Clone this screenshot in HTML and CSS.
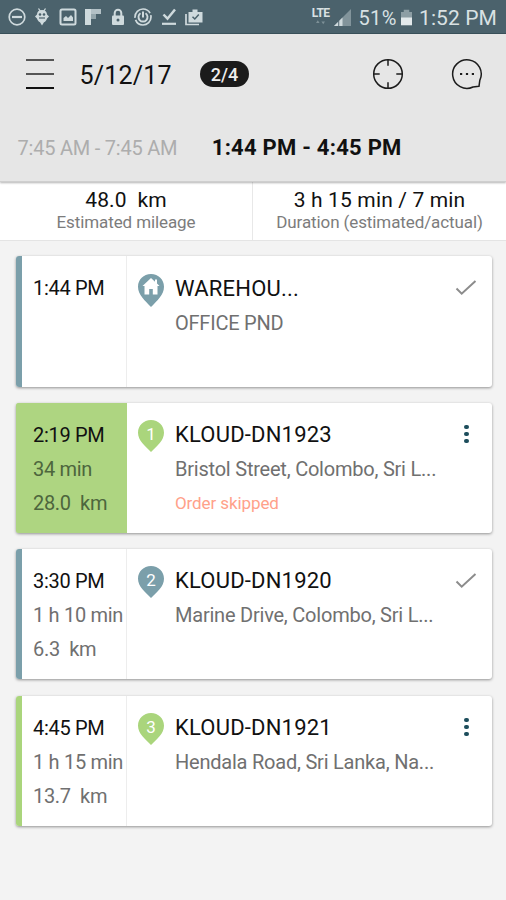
FILE: index.html
```html
<!DOCTYPE html>
<html lang="en">
<head>
  <meta charset="UTF-8" />
  <title>Route 5/12/17</title>
  <link rel="stylesheet" href="styles.css">
</head>
<body>

  <div class="status-bar">
    <div class="status-icons">
      <svg viewBox="0 0 18 18"><circle cx="9" cy="9" r="7.8" fill="none" stroke="#cfdadd" stroke-width="1.7"/><path d="M4 9h10" stroke="#cfdadd" stroke-width="2.2"/></svg>
      <svg viewBox="0 0 18 18"><path d="M5.5 0.5l2 3M12.5 0.5l-2 3" stroke="#cfdadd" stroke-width="1.3"/><path d="M9 2c3.200 0 5 2 5 4.500l2 2-2 2c-.5 2-1.500 3-3 3.800L9 17.500l-2-3.200c-1.500-.8-2.500-1.800-3-3.800l-2-2 2-2C4 4 5.800 2 9 2z" fill="#cfdadd"/><circle cx="7" cy="6.500" r="1.300" fill="#4b626c"/><circle cx="11" cy="6.500" r="1.300" fill="#4b626c"/><path d="M6 10h6" stroke="#4b626c" stroke-width="1.200"/></svg>
      <svg viewBox="0 0 18 18"><rect x="1.500" y="1.500" width="15" height="15" rx="1.500" fill="none" stroke="#cfdadd" stroke-width="2"/><path d="M4.500 13V10l2.500-2 2 2 3-3 2 2.500V13z" fill="#cfdadd"/></svg>
      <svg viewBox="0 0 18 18"><path d="M1 1h6v16H1z" fill="#cfdadd"/><path d="M7 1h10v5H7z" fill="#b3c1c6"/><path d="M7 6h5v5H7z" fill="#93a5ab"/></svg>
      <svg viewBox="0 0 18 18"><path d="M5.700 8V5a3.300 3.300 0 0 1 6.600 0v3" fill="none" stroke="#cfdadd" stroke-width="2"/><rect x="3" y="7.500" width="12" height="9.500" rx="1" fill="#cfdadd"/><circle cx="9" cy="12" r="1.500" fill="#4b626c"/></svg>
      <svg viewBox="0 0 18 18"><circle cx="9" cy="9" r="8" fill="none" stroke="#cfdadd" stroke-width="1.700" stroke-dasharray="22 2"/><path d="M6.500 5.300a4.500 4.500 0 1 0 5 0" fill="none" stroke="#cfdadd" stroke-width="1.900"/><path d="M9 3.500v6" stroke="#cfdadd" stroke-width="2"/></svg>
      <svg viewBox="0 0 18 18"><path d="M3.500 6.500l4 4.200L15 1.500" fill="none" stroke="#cfdadd" stroke-width="2.500"/><path d="M2 15.800h14" stroke="#cfdadd" stroke-width="2.200"/></svg>
      <svg viewBox="0 0 18 18"><path d="M1 6v10.500h13" fill="none" stroke="#cfdadd" stroke-width="1.700"/><path d="M3.500 4h4V1.500h5V4h5v10.500h-14z" fill="#cfdadd"/><path d="M7.500 8.700l2.300 2.300 4-4.500" fill="none" stroke="#4b626c" stroke-width="1.500"/></svg>
    </div>
    <div class="status-info">
      <div class="lte">LTE<svg viewBox="0 0 10 5"><path d="M0 3l2-3 2 3zM6 1.500h4l-2 3z" fill="#7d9097"/></svg></div>
      <svg class="signal" viewBox="0 0 18 18"><path d="M0 18L18 0v18z" fill="#82949b"/><path d="M0 18L9 9v9z" fill="#cfdadd"/><path d="M5 12v6" stroke="#4b626c" stroke-width="1"/></svg>
      <span class="percent">51%</span>
      <svg class="battery" viewBox="0 0 12 17"><path d="M0 2.500h3V0h6v2.500h3V9H0z" fill="#8d9ea4"/><path d="M0 8.500h12V17H0z" fill="#e3e9eb"/></svg>
      <span class="clock">1:52 PM</span>
    </div>
  </div>

  <div class="header">
    <div class="toolbar">
      <div class="menu">
        <span></span>
        <span></span>
        <span></span>
      </div>
      <div class="date">5/12/17</div>
      <div class="badge">2/4</div>
      <svg class="locate" viewBox="0 0 32 32" fill="none" stroke="#1c1c1c" stroke-width="1.500"><circle cx="16" cy="16" r="14.300"/><path d="M16 1.700v6M16 24.300v6M1.700 16h6M24.300 16h6"/></svg>
      <svg class="chat" viewBox="0 0 32 32" fill="none" stroke="#1c1c1c" stroke-width="1.500"><path d="M22 29A14.300 14.300 0 1 1 28.800 22.300L28 28.300z" stroke-linejoin="round"/><path d="M9 16h2.200M14.900 16h2.200M20.800 16h2.200" stroke-width="2"/></svg>
    </div>
    <div class="tabs">
      <div class="tab">7:45 AM - 7:45 AM</div>
      <div class="tab active">1:44 PM - 4:45 PM</div>
    </div>
  </div>

  <div class="summary">
    <div class="stat">
      <div class="value">48.0&nbsp; km</div>
      <div class="label">Estimated mileage</div>
    </div>
    <div class="stat">
      <div class="value">3 h 15 min / 7 min</div>
      <div class="label">Duration (estimated/actual)</div>
    </div>
  </div>

  <div class="stops">
    <div class="card blue">
      <div class="times">
        <div class="time">1:44 PM</div>
      </div>
      <svg class="pin" viewBox="0 0 26 33"><path d="M13 0C5.500 0 0 5.600 0 12.700 0 21 7 26.500 13 33c6-6.500 13-12 13-20.300C26 5.600 20.500 0 13 0z" fill="#7b9faa"/><path d="M13 4L4.500 12h2v8.500h4.700V15h3.600v5.500h4.700V12h2l-2.500-2.400V5.500h-2v2.200z" fill="#fff"/></svg>
      <div class="info">
        <div class="name">WAREHOU...</div>
        <div class="address">OFFICE PND</div>
      </div>
      <svg class="check" viewBox="0 0 22 18"><path d="M1.500 9.500l5.200 5.200L20.500 2" fill="none" stroke="#8c8c8c" stroke-width="2"/></svg>
    </div>

    <div class="card green current">
      <div class="times">
        <div class="time">2:19 PM</div>
        <div>34 min</div>
        <div>28.0&nbsp; km</div>
      </div>
      <svg class="pin" viewBox="0 0 26 33"><path d="M13 0C5.500 0 0 5.600 0 12.700 0 20.500 7 26 13 32c6-6 13-11.500 13-19.300C26 5.600 20.500 0 13 0z" fill="#aad57c"/><text x="13" y="19.500">1</text></svg>
      <div class="info">
        <div class="name">KLOUD-DN1923</div>
        <div class="address">Bristol Street, Colombo, Sri L...</div>
        <div class="skipped">Order skipped</div>
      </div>
      <div class="more"><i></i><i></i><i></i></div>
    </div>

    <div class="card blue">
      <div class="times">
        <div class="time">3:30 PM</div>
        <div>1 h 10 min</div>
        <div>6.3&nbsp; km</div>
      </div>
      <svg class="pin" viewBox="0 0 26 33"><path d="M13 0C5.500 0 0 5.600 0 12.700 0 20.500 7 26 13 32c6-6 13-11.500 13-19.300C26 5.600 20.500 0 13 0z" fill="#7b9faa"/><text x="13" y="19.500">2</text></svg>
      <div class="info">
        <div class="name">KLOUD-DN1920</div>
        <div class="address">Marine Drive, Colombo, Sri L...</div>
      </div>
      <svg class="check" viewBox="0 0 22 18"><path d="M1.500 9.500l5.200 5.200L20.500 2" fill="none" stroke="#8c8c8c" stroke-width="2"/></svg>
    </div>

    <div class="card green">
      <div class="times">
        <div class="time">4:45 PM</div>
        <div>1 h 15 min</div>
        <div>13.7&nbsp; km</div>
      </div>
      <svg class="pin" viewBox="0 0 26 33"><path d="M13 0C5.500 0 0 5.600 0 12.700 0 20.500 7 26 13 32c6-6 13-11.500 13-19.300C26 5.600 20.500 0 13 0z" fill="#aad57c"/><text x="13" y="19.500">3</text></svg>
      <div class="info">
        <div class="name">KLOUD-DN1921</div>
        <div class="address">Hendala Road, Sri Lanka, Na...</div>
      </div>
      <div class="more"><i></i><i></i><i></i></div>
    </div>
  </div>

</body>
</html>
```
FILE: styles.css
```css
* {
  box-sizing: border-box;
}

body {
  font-family: Roboto, "Liberation Sans", sans-serif;
  background: #f3f3f3;
  margin: 0;
  height: 900px;
  overflow: hidden;
  color: #111;
  white-space: nowrap;
}

svg {
  display: block;
  flex: none;
}

.status-bar {
  display: flex;
  justify-content: space-between;
  height: 34px;
  padding: 0 9px 0 8px;
  background: #4b626c;
  border-bottom: 1px solid #3b525b;
  color: #d9e1e3;
}

.status-icons {
  display: flex;
  align-items: center;
  gap: 7.3px;
}

.status-icons svg {
  width: 18px;
  height: 18px;
}

.status-info {
  display: flex;
  align-items: center;
  font-size: 20px;
  line-height: 34px;
}

.status-info span {
  padding-top: 3px;
}

.status-info .percent {
  letter-spacing: 0.5px;
}

.status-info .clock {
  font-size: 21px;
  letter-spacing: 0.1px;
}

.lte {
  font-size: 12px;
  font-weight: bold;
  line-height: 11px;
  letter-spacing: -0.6px;
  margin-right: 5px;
}

.lte svg {
  width: 9px;
  height: 5px;
  margin: 1px auto 0;
}

.signal {
  width: 17px;
  height: 17px;
  margin: 2px 7px 0 0;
}

.battery {
  width: 11px;
  height: 17px;
  margin: 1px 7px 0 4px;
}

.header {
  position: relative;
  height: 148px;
  background: #e6e6e6;
  border-bottom: 1px solid #cfcfcf;
  box-shadow: 0 1px 2px rgba(0, 0, 0, 0.3);
}

.toolbar {
  display: flex;
  align-items: center;
  height: 79px;
  padding: 0 23px 0 26px;
}

.menu {
  display: flex;
  flex-direction: column;
  gap: 12px;
  width: 28px;
  margin-top: 1px;
}

.menu span {
  height: 2px;
  background: #555;
}

.menu span:last-child {
  background: #111;
}

.date {
  font-size: 25px;
  letter-spacing: 0.2px;
  margin: 3px 0 0 25.5px;
  width: 120.5px;
}

.badge {
  width: 49px;
  height: 26px;
  line-height: 27px;
  border-radius: 13px;
  background: #1b1b1b;
  color: #eee;
  font-size: 18px;
  font-weight: 500;
  text-align: center;
}

.locate {
  width: 32px;
  height: 32px;
  margin-left: auto;
}

.chat {
  width: 32px;
  height: 32px;
  margin-left: 47px;
}

.tabs {
  display: flex;
  gap: 34.5px;
  padding-left: 17.5px;
  font-size: 20px;
  line-height: 24px;
  margin-top: 23px;
}

.tab {
  color: #adadad;
  letter-spacing: -0.22px;
}

.tab.active {
  color: #111;
  font-size: 22px;
  font-weight: bold;
  letter-spacing: 0.25px;
}

.summary {
  display: grid;
  grid-template-columns: 252px 1fr;
  height: 59px;
  background: #fff;
  border-bottom: 1px solid #e4e4e4;
  text-align: center;
}

.stat {
  padding-top: 6px;
}

.stat + .stat {
  border-left: 1px solid #e8e8e8;
}

.value {
  font-size: 21px;
  line-height: 24px;
  letter-spacing: 0.15px;
}

.label {
  font-size: 17px;
  line-height: 20px;
  letter-spacing: -0.1px;
  color: #7c7c7c;
}

.stops {
  display: flex;
  flex-direction: column;
  gap: 16.1px;
  padding: 15.4px 14.5px 0 15.6px;
}

.card {
  display: flex;
  height: 130.3px;
  background: #fff;
  border-radius: 3px;
  box-shadow: 0 1px 3px rgba(0, 0, 0, 0.4);
  overflow: hidden;
}

.times {
  width: 111px;
  padding: 15px 0 0 11.4px;
  border-left: 6px solid #7b9faa;
  border-right: 1px solid #ededed;
  font-size: 20px;
  line-height: 34px;
  letter-spacing: -0.3px;
  color: #707070;
}

.green .times {
  border-left-color: #aad57c;
}

.current .times {
  background: #aed581;
  border-color: #aed581;
  color: #4d663d;
}

.times .time {
  color: #111;
}

.pin {
  width: 26px;
  height: 33px;
  margin: 17.3px 11px 0 11.4px;
}

.pin text {
  fill: #fff;
  font-size: 17px;
  text-anchor: middle;
}

.info {
  flex: 1;
  padding-top: 15.3px;
  line-height: 34px;
}

.name {
  font-size: 22px;
  letter-spacing: 0.2px;
}

.address {
  font-size: 20px;
  letter-spacing: -0.22px;
  color: #707070;
}

.skipped {
  font-size: 17px;
  letter-spacing: -0.1px;
  color: #ffa18a;
}

.check {
  width: 22px;
  height: 18px;
  margin: 22.6px 14.5px 0 0;
}

.more {
  display: flex;
  flex-direction: column;
  gap: 2.5px;
  margin: 22px 23px 0 0;
}

.more i {
  width: 4.5px;
  height: 4.5px;
  border-radius: 50%;
  background: #1d4d5c;
}
```
